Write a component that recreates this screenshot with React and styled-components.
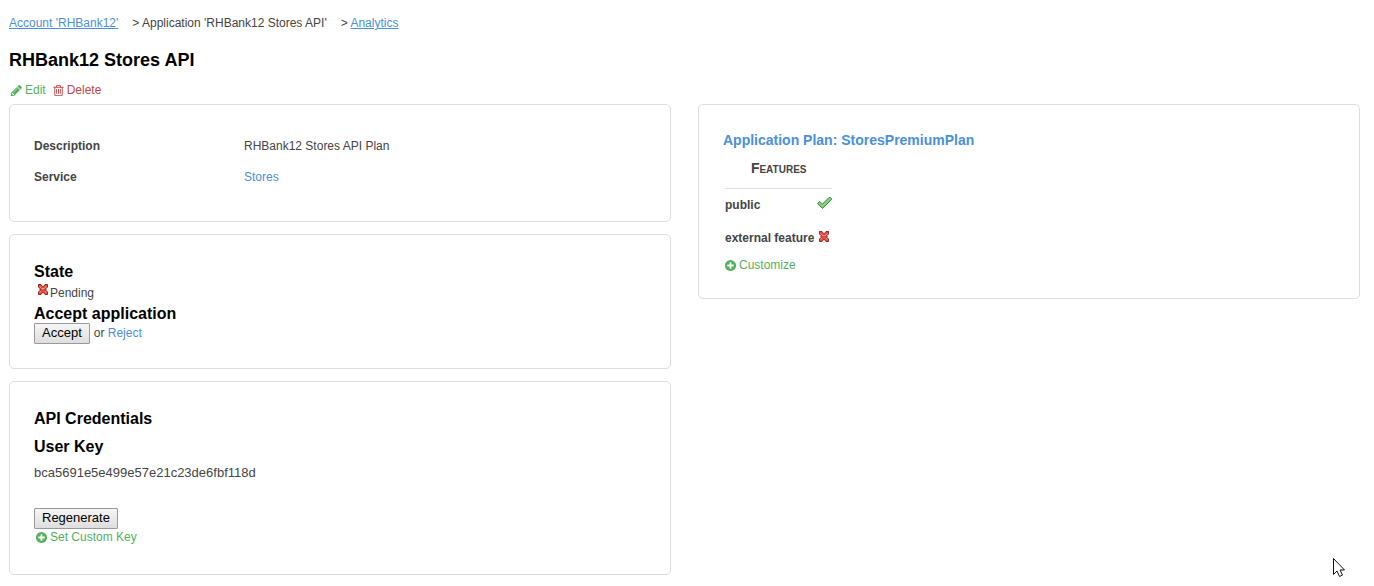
import React from "react";
import styled, { createGlobalStyle } from "styled-components";

const GlobalStyle = createGlobalStyle`
  * { box-sizing: border-box; }
  body {
    margin: 0;
    background: #fff;
    color: #444;
    font: 12px/20px "Liberation Sans", Arial, sans-serif;
  }
`;

const Page = styled.main`
  padding: 13px 14px 11px 9px;
`;

const Breadcrumb = styled.nav`
  display: flex;
  gap: 14px;
`;

const Link = styled.a`
  color: #4a90d9;
  text-decoration: ${(p) => (p.$underlined ? "underline" : "none")};
`;

const Title = styled.h1`
  margin: 15px 0 8px;
  color: #000;
  font-size: 18px;
  line-height: 24px;
`;

const Actions = styled.div`
  display: flex;
  gap: 6px;
  padding-left: 1px;
  margin-bottom: 4px;
`;

const ActionLink = styled.a`
  display: flex;
  align-items: center;
  gap: 2px;
  color: ${(p) => (p.$danger ? "#c0474b" : "#53b15d")};
  text-decoration: none;
`;

const Columns = styled.div`
  display: grid;
  grid-template-columns: 1fr 1fr;
  align-items: start;
  gap: 27px;
`;

const Stack = styled.div`
  display: grid;
  gap: 12px;
`;

const Card = styled.section`
  padding: 24px;
  border: 1px solid #ddd;
  border-radius: 5px;
`;

const Details = styled.dl`
  display: grid;
  grid-template-columns: 210px 1fr;
  margin: 2px 0 4px;
  line-height: 31px;
`;

const Term = styled.dt`
  font-weight: bold;
`;

const Value = styled.dd`
  margin: 0;
`;

const Heading = styled.h2`
  margin: 0 0 ${(p) => (p.$spaced ? 4 : 0)}px;
  padding-top: 2px;
  color: #000;
  font-size: 16px;
  line-height: ${(p) => (p.$tight ? 18 : 22)}px;
`;

const PlanHeading = styled.h2`
  margin: 0;
  font-size: 14px;
  line-height: 22px;
`;

const State = styled.div`
  display: flex;
  padding-left: 2px;
`;

const FormRow = styled.form`
  display: flex;
  align-items: flex-start;
  gap: 4px;
`;

const Button = styled.button`
  height: 21px;
  padding: 0 7px 2px;
  border: 1px solid #999;
  border-radius: 1px;
  background: linear-gradient(#f6f6f6, #dedede);
  color: #000;
  font: 13px/16px "Liberation Sans", Arial, sans-serif;
`;

const Key = styled.div`
  margin-bottom: 24px;
  font-size: 13px;
  line-height: 22px;
`;

const CardFooter = styled.div`
  display: flex;
  padding: 0 0 ${(p) => (p.$spaced ? 5 : 1)}px 1px;
  line-height: 16px;
`;

const Features = styled.table`
  border-spacing: 2px;

  thead th {
    padding: 0 0 4px;
    border-bottom: 1px solid #ddd;
    font-size: 14px;
    font-variant: small-caps;
    line-height: 31px;
  }

  tbody th {
    padding: 0 0 2px;
    line-height: 29px;
    text-align: left;
  }

  td {
    padding: 0 0 6px 1px;
  }
`;

const Icon = styled.svg`
  display: block;
  flex: none;
  width: ${(p) => p.$size}px;
  height: ${(p) => p.$size}px;
`;

const Pointer = styled.svg`
  position: fixed;
  right: 28px;
  bottom: 8px;
  width: 14px;
  height: 21px;
  pointer-events: none;
`;

const glyphs = {
  pencil:
    "M491 1536l91-91-235-235-91 91v107h128v128h107zm523-928q0-22-22-22-10 0-17 7l-542 542q-7 7-7 17 0 22 22 22 10 0 17-7l542-542q7-7 7-17zm-54-192l416 416-832 832h-416v-416zm683 96q0 53-37 90l-166 166-416-416 166-165q36-38 90-38 53 0 91 38l235 234q37 39 37 91z",
  trash:
    "M704 736v576q0 14-9 23t-23 9h-64q-14 0-23-9t-9-23v-576q0-14 9-23t23-9h64q14 0 23 9t9 23zm256 0v576q0 14-9 23t-23 9h-64q-14 0-23-9t-9-23v-576q0-14 9-23t23-9h64q14 0 23 9t9 23zm256 0v576q0 14-9 23t-23 9h-64q-14 0-23-9t-9-23v-576q0-14 9-23t23-9h64q14 0 23 9t9 23zm128 724v-948h-896v948q0 22 7 40.5t14.5 27 10.5 8.5h832q3 0 10.5-8.5t14.5-27 7-40.5zm-672-1076h448l-48-117q-7-9-17-11h-317q-10 2-17 11zm928 32v64q0 14-9 23t-23 9h-96v948q0 83-47 143.5t-113 60.5h-832q-66 0-113-58.5t-47-141.5v-952h-96q-14 0-23-9t-9-23v-64q0-14 9-23t23-9h309l70-167q15-37 54-63t79-26h320q40 0 79 26t54 63l70 167h309q14 0 23 9t9 23z",
  plus:
    "M1344 960v-128q0-26-19-45t-45-19h-256v-256q0-26-19-45t-45-19h-128q-26 0-45 19t-19 45v256h-256q-26 0-45 19t-19 45v128q0 26 19 45t45 19h256v256q0 26 19 45t45 19h128q26 0 45-19t19-45v-256h256q26 0 45-19t19-45zm320-64q0 209-103 385.5t-279.5 279.5-385.5 103-385.5-103-279.5-279.5-103-385.5 103-385.5 279.5-279.5 385.5-103 385.5 103 279.5 279.5 103 385.5z",
};

function Action({ glyph, danger, children }) {
  return (
    <ActionLink href="#" $danger={danger}>
      <Icon $size={13} viewBox="0 0 1792 1792" fill="currentColor" aria-hidden="true">
        <path d={glyphs[glyph]} />
      </Icon>
      {children}
    </ActionLink>
  );
}

function Cross() {
  return (
    <Icon $size={14} viewBox="0 0 14 14" aria-hidden="true">
      <path
        d="M2.500 1.500h2.500l1.500 2h1l1.500-2h2.500v2.500l-1.500 1.500v2l1.500 1.500v2.500h-2.500l-1.500-2h-1l-1.500 2h-2.500v-2.500l1.500-1.500v-2l-1.500-1.500z"
        fill="#dd4a42"
        stroke="#96261e"
        strokeLinejoin="round"
      />
      <path d="M3.500 3l2 2.500h3l2-2.500M3.500 10l1.500-2M10.500 10l-1.500-2" fill="none" stroke="#f0948c" />
    </Icon>
  );
}

function Check() {
  return (
    <Icon $size={15} viewBox="1 1 15 15" aria-hidden="true">
      <path
        d="M1.500 8.500l2-2 3 2.500 6.500-6.500h1.500l1 1v1L6.500 13.500z"
        fill="#7cc96f"
        stroke="#3f8f3c"
        strokeLinejoin="round"
      />
      <path d="M3 8l3.500 3 7.500-7.500" fill="none" stroke="#9ad98d" />
    </Icon>
  );
}

export default function App() {
  return (
    <>
      <GlobalStyle />
      <Page>
        <Breadcrumb aria-label="Breadcrumb">
          <Link href="#" $underlined>Account 'RHBank12'</Link>
          <span>&gt; Application 'RHBank12 Stores API'</span>
          <span>&gt; <Link href="#" $underlined>Analytics</Link></span>
        </Breadcrumb>
        <Title>RHBank12 Stores API</Title>
        <Actions>
          <Action glyph="pencil">Edit</Action>
          <Action glyph="trash" danger>Delete</Action>
        </Actions>
        <Columns>
          <Stack>
            <Card>
              <Details>
                <Term>Description</Term>
                <Value>RHBank12 Stores API Plan</Value>
                <Term>Service</Term>
                <Value><Link href="#">Stores</Link></Value>
              </Details>
            </Card>
            <Card>
              <Heading>State</Heading>
              <State><Cross />Pending</State>
              <Heading $tight>Accept application</Heading>
              <FormRow onSubmit={(e) => e.preventDefault()}>
                <Button>Accept</Button>
                <span>or <Link href="#">Reject</Link></span>
              </FormRow>
            </Card>
            <Card>
              <Heading $spaced>API Credentials</Heading>
              <Heading $spaced>User Key</Heading>
              <Key>bca5691e5e499e57e21c23de6fbf118d</Key>
              <FormRow onSubmit={(e) => e.preventDefault()}>
                <Button>Regenerate</Button>
              </FormRow>
              <CardFooter $spaced><Action glyph="plus">Set Custom Key</Action></CardFooter>
            </Card>
          </Stack>
          <Card>
            <PlanHeading><Link href="#">Application Plan: StoresPremiumPlan</Link></PlanHeading>
            <Features>
              <thead>
                <tr><th colSpan={2}>Features</th></tr>
              </thead>
              <tbody>
                <tr><th scope="row">public</th><td><Check /></td></tr>
                <tr><th scope="row">external feature</th><td><Cross /></td></tr>
              </tbody>
            </Features>
            <CardFooter><Action glyph="plus">Customize</Action></CardFooter>
          </Card>
        </Columns>
      </Page>
      <Pointer viewBox="0 0 14 21" aria-hidden="true">
        <path d="M1.500 1.500v16l3.500-3.500 2.500 5.500 3-1.500-2.500-5h4.500z" fill="#fff" stroke="#111" />
      </Pointer>
    </>
  );
}
